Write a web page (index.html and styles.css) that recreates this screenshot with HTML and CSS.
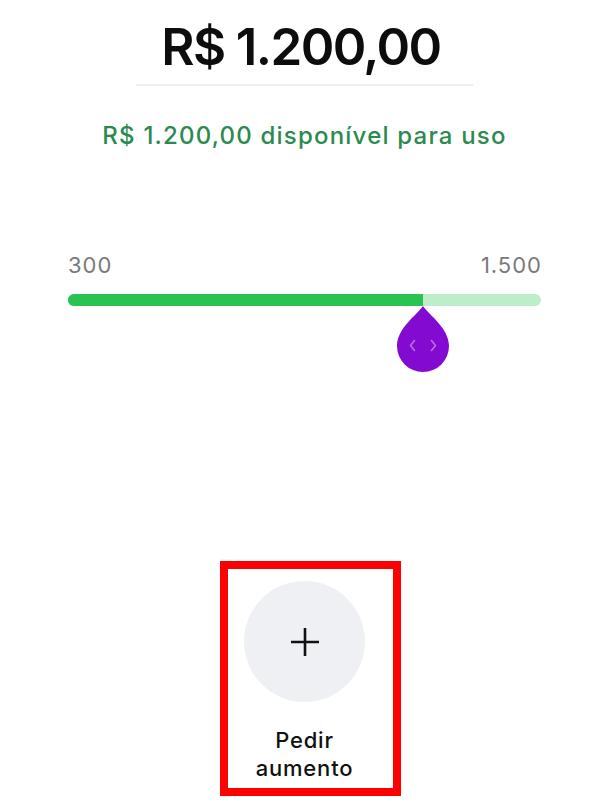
FILE: index.html
```html
<!DOCTYPE html>
<html lang="pt-BR">
<head>
  <meta charset="UTF-8">
  <title>Limite do cartão</title>
  <link rel="stylesheet" href="styles.css">
</head>
<body>
  <main class="limit-screen">
    <h1 class="balance">R$ 1.200,00</h1>
    <div class="divider"></div>
    <p class="available">R$ 1.200,00 disponível para uso</p>

    <section class="slider">
      <div class="slider-labels">
        <span>300</span>
        <span>1.500</span>
      </div>
      <div class="track">
        <div class="track-fill" style="width: 75%"></div>
        <div class="thumb" style="left: 75%">
          <svg width="52" height="66" viewBox="0 0 52 66">
            <path d="M26 0 C32 9 52 22 52 40 A26 26 0 0 1 0 40 C0 22 20 9 26 0 Z" fill="#820ad1"/>
            <path d="M17.5 34.5 L13.5 39.5 L17.5 44.5" fill="none" stroke="#b772e6" stroke-width="1.6" stroke-linecap="round" stroke-linejoin="round"/>
            <path d="M34.5 34.5 L38.5 39.5 L34.5 44.5" fill="none" stroke="#b772e6" stroke-width="1.6" stroke-linecap="round" stroke-linejoin="round"/>
          </svg>
        </div>
      </div>
    </section>

    <div class="actions">
      <div class="action-box">
        <button class="action-circle" aria-label="Pedir aumento">
          <svg width="30" height="30" viewBox="0 0 30 30">
            <path d="M15 1 V29 M1 15 H29" stroke="#111" stroke-width="2.6"/>
          </svg>
        </button>
        <span class="action-label">Pedir<br>aumento</span>
      </div>
    </div>
  </main>
</body>
</html>
```

FILE: styles.css
```css
body {
  margin: 0;
  font-family: Inter, "Noto Sans", Arial, sans-serif;
  background: #fff;
  color: #111;
}
.limit-screen {
  padding-top: 17px;
  display: flex;
  flex-direction: column;
}
.balance {
  margin: 0;
  padding-right: 7px;
  text-align: center;
  font-size: 51px;
  line-height: 60px;
  font-weight: 600;
  letter-spacing: -1.6px;
  color: #0d0d0d;
}
.divider {
  width: 337px;
  height: 2px;
  margin: 7px auto 0 auto;
  background: #eeeeee;
}
.available {
  margin: 35px 0 0 0;
  text-align: center;
  font-size: 24px;
  line-height: 30px;
  font-weight: 500;
  letter-spacing: 1.2px;
  color: #2b8a4f;
}
.slider {
  margin: 100px 68px 0 68px;
}
.slider-labels {
  display: flex;
  justify-content: space-between;
  font-size: 22px;
  line-height: 28px;
  letter-spacing: 1px;
  color: #7a7a7a;
}
.slider-labels span:last-child { margin-right: -1px; }
.track {
  position: relative;
  height: 12px;
  margin-top: 15px;
  border-radius: 6px;
  background: #bdeec9;
}
.track-fill {
  height: 100%;
  border-radius: 6px 0 0 6px;
  background: #28c350;
}
.thumb {
  position: absolute;
  top: 12px;
  width: 52px;
  height: 66px;
  margin-left: -26px;
}
.thumb svg { display: block; }
.actions {
  display: flex;
  justify-content: center;
  margin-top: 255px;
  padding-left: 12px;
}
.action-box {
  display: flex;
  flex-direction: column;
  align-items: center;
  border: 8px solid #ff0000;
  padding: 12px 28px 6px 16px;
}
.action-circle {
  width: 121px;
  height: 121px;
  border: none;
  border-radius: 50%;
  background: #eff0f3;
  display: flex;
  align-items: center;
  justify-content: center;
  padding: 0;
}
.action-label {
  margin-top: 24px;
  text-align: center;
  font-size: 22px;
  line-height: 28px;
  font-weight: 500;
  letter-spacing: 0.8px;
  color: #111;
}
```
